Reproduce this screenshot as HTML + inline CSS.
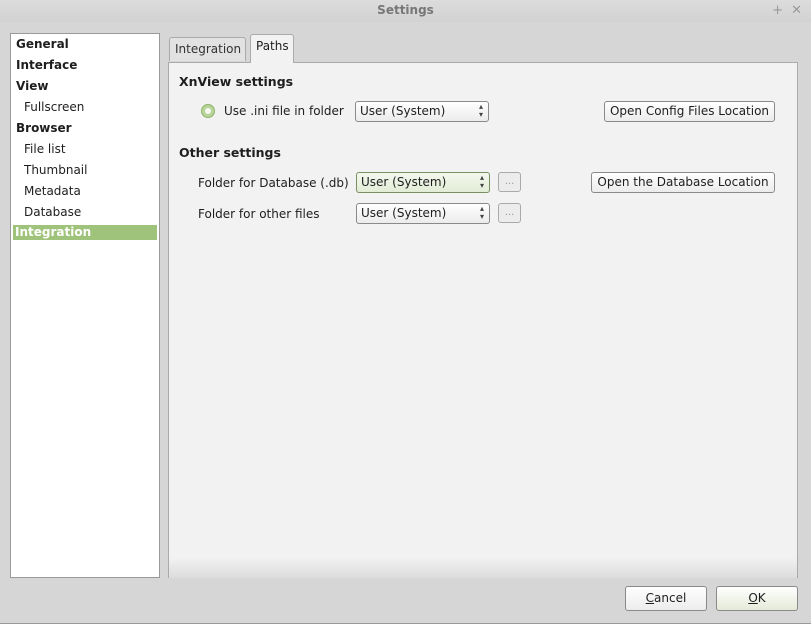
<!DOCTYPE html>
<html><head><style>
*{margin:0;padding:0;box-sizing:border-box}
body{width:811px;height:627px;background:#d6d6d6;font-family:"DejaVu Sans","Liberation Sans",sans-serif;font-size:12px;color:#1e1e1e;position:relative;overflow:hidden}
.a{position:absolute;white-space:nowrap}
.title{left:0;top:0;width:811px;height:22px;background:linear-gradient(#dcdcdc,#d2d2d2);text-align:center;line-height:21px;font-weight:bold;color:#777;font-size:12px}
.side{left:10px;top:33px;width:150px;height:545px;background:#fff;border:1px solid #9a9a9a}
.side div{position:absolute;left:5px;font-size:12px}
.b{font-weight:bold}
.sel{left:2px!important;width:144px;height:15px;background:#9fc37a;color:#fff;padding-left:2px}
.panel{left:168px;top:62px;width:630px;height:516px;background:linear-gradient(to bottom,#f2f2f2 0,#f2f2f2 96%,#dcdcdc 100%);border:1px solid #aaa;border-bottom:none}
.tab{height:24px;border:1px solid #aaa;border-bottom:none;border-radius:3px 3px 0 0;line-height:22px;padding:0 5px}
.combo{height:21px;width:134px;border:1px solid #8a8a8a;border-radius:3px;background:linear-gradient(#fff,#ececec);line-height:19px;padding-left:4px}
.combo:after{content:"▴\A▾";white-space:pre;position:absolute;right:5px;top:1px;font-size:8px;line-height:8px;color:#444}
.btn{height:21px;border:1px solid #8a8a8a;border-radius:3px;background:linear-gradient(#fff,#ececec);line-height:19px;text-align:center}
.dots{width:23px;height:20px;border:1px solid #aaa;border-radius:3px;background:#ececec;color:#999;text-align:center;line-height:18px;font-size:10px}
</style></head><body>
<div class="a title">Settings</div>
<div class="a" style="right:28px;top:3px;color:#999;font-size:13px">+</div>
<div class="a" style="right:9px;top:3px;color:#999;font-size:13px">✕</div>
<div class="a side">
<div class="b" style="top:3px">General</div>
<div class="b" style="top:24px">Interface</div>
<div class="b" style="top:45px">View</div>
<div style="top:66px;left:13px">Fullscreen</div>
<div class="b" style="top:87px">Browser</div>
<div style="top:108px;left:13px">File list</div>
<div style="top:129px;left:13px">Thumbnail</div>
<div style="top:150px;left:13px">Metadata</div>
<div style="top:171px;left:13px">Database</div>
<div class="b sel" style="top:191px">Integration</div>
</div>
<div class="a tab" style="left:169px;top:37px;height:24px;width:77px;background:#e2e2e2;color:#333">Integration</div>
<div class="a panel"></div>
<div class="a tab" style="left:250px;top:34px;height:29px;width:44px;background:#f2f2f2;z-index:2">Paths</div>
<div class="a b" style="left:179px;top:74px;font-size:12.5px">XnView settings</div>
<div class="a" style="left:201px;top:104px;width:14px;height:14px;border-radius:50%;background:#b9d49a;border:1px solid #8fb46a"><div style="position:absolute;left:3px;top:3px;width:6px;height:6px;border-radius:50%;background:#f4f8ee"></div></div>
<div class="a" style="left:224px;top:104px">Use .ini file in folder</div>
<div class="a combo" style="left:355px;top:101px">User (System)</div>
<div class="a btn" style="left:604px;top:101px;width:171px">Open Config Files Location</div>
<div class="a b" style="left:179px;top:145px;font-size:12.5px">Other settings</div>
<div class="a" style="left:198px;top:176px">Folder for Database (.db)</div>
<div class="a combo" style="left:356px;top:172px;background:linear-gradient(#f4f8ee,#e2ecd6);border-color:#7a8f63">User (System)</div>
<div class="a dots" style="left:498px;top:172px">...</div>
<div class="a btn" style="left:591px;top:172px;width:184px">Open the Database Location</div>
<div class="a" style="left:198px;top:207px">Folder for other files</div>
<div class="a combo" style="left:356px;top:203px">User (System)</div>
<div class="a dots" style="left:498px;top:203px">...</div>
<div class="a btn" style="left:625px;top:586px;width:82px;height:25px;line-height:23px"><u>C</u>ancel</div>
<div class="a btn" style="left:716px;top:586px;width:82px;height:25px;line-height:23px;background:linear-gradient(#fff,#e4ead8)"><u>O</u>K</div>
<div class="a" style="left:0;top:623px;width:811px;height:4px;background:#fff;border-top:1px solid #999"></div>
</body></html>
